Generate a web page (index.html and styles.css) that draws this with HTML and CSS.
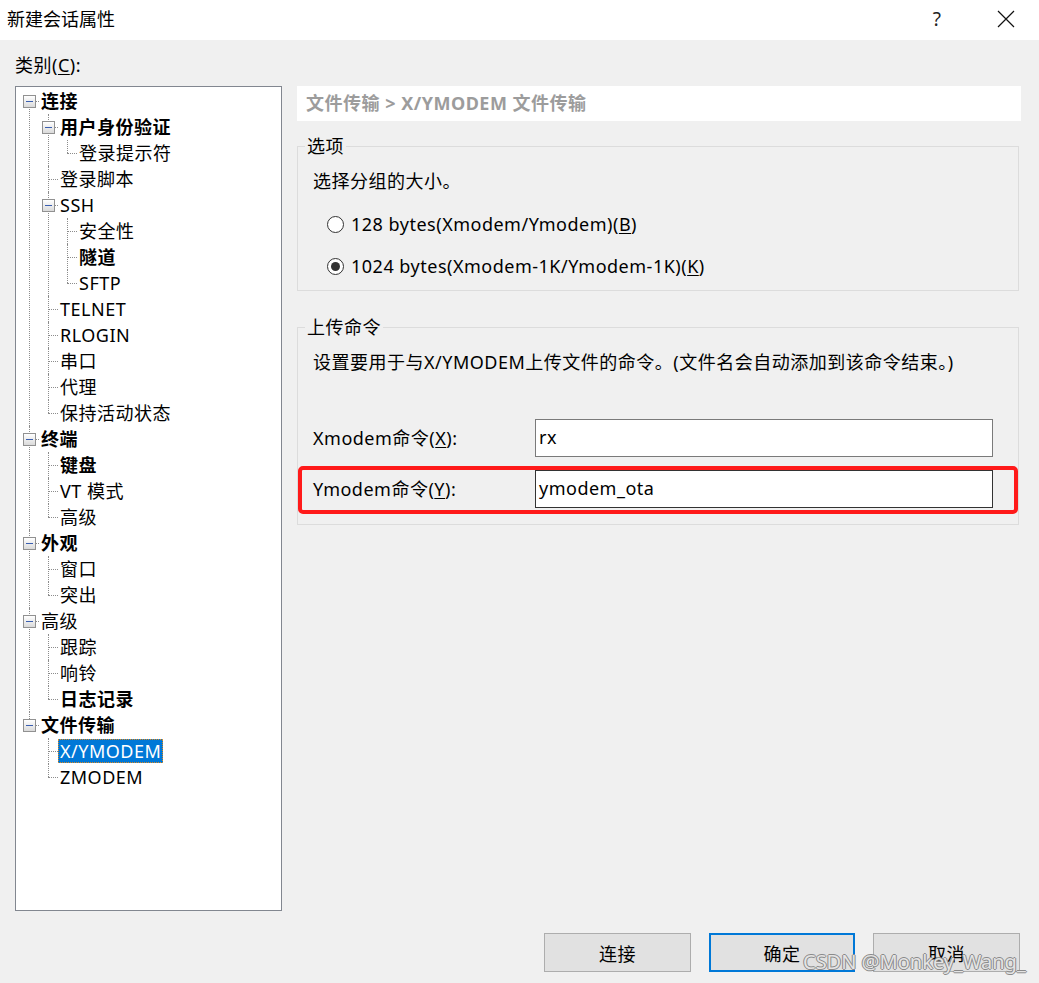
FILE: index.html
```html
<!DOCTYPE html>
<html lang="zh-CN">
<head>
<meta charset="utf-8">
<title>新建会话属性</title>
<link rel="stylesheet" href="styles.css">
</head>
<body>
<div class="window">
  <div class="titlebar">
    <span class="title">新建会话属性</span>
    <span class="help">?</span>
    <span class="close"><svg width="18" height="18" viewBox="0 0 18 18"><path d="M1 1L17 17M17 1L1 17" stroke="#111" stroke-width="1.2" fill="none"/></svg></span>
  </div>
  <div class="content">
    <div class="left">
      <div class="cat-label">类别(<u>C</u>):</div>
      <div class="tree">
        <ul class="l0">
          <li><div class="row"><span class="tg"></span><span class="lb b">连接</span></div>
            <ul class="l1">
              <li><div class="row"><span class="tg"></span><span class="lb b">用户身份验证</span></div>
                <ul class="l2">
                  <li><div class="row"><span class="lb">登录提示符</span></div></li>
                </ul>
              </li>
              <li><div class="row"><span class="lb">登录脚本</span></div></li>
              <li><div class="row"><span class="tg"></span><span class="lb">SSH</span></div>
                <ul class="l2">
                  <li><div class="row"><span class="lb">安全性</span></div></li>
                  <li><div class="row"><span class="lb b">隧道</span></div></li>
                  <li><div class="row"><span class="lb">SFTP</span></div></li>
                </ul>
              </li>
              <li><div class="row"><span class="lb">TELNET</span></div></li>
              <li><div class="row"><span class="lb">RLOGIN</span></div></li>
              <li><div class="row"><span class="lb">串口</span></div></li>
              <li><div class="row"><span class="lb">代理</span></div></li>
              <li><div class="row"><span class="lb">保持活动状态</span></div></li>
            </ul>
          </li>
          <li><div class="row"><span class="tg"></span><span class="lb b">终端</span></div>
            <ul class="l1">
              <li><div class="row"><span class="lb b">键盘</span></div></li>
              <li><div class="row"><span class="lb">VT 模式</span></div></li>
              <li><div class="row"><span class="lb">高级</span></div></li>
            </ul>
          </li>
          <li><div class="row"><span class="tg"></span><span class="lb b">外观</span></div>
            <ul class="l1">
              <li><div class="row"><span class="lb">窗口</span></div></li>
              <li><div class="row"><span class="lb">突出</span></div></li>
            </ul>
          </li>
          <li><div class="row"><span class="tg"></span><span class="lb">高级</span></div>
            <ul class="l1">
              <li><div class="row"><span class="lb">跟踪</span></div></li>
              <li><div class="row"><span class="lb">响铃</span></div></li>
              <li><div class="row"><span class="lb b">日志记录</span></div></li>
            </ul>
          </li>
          <li><div class="row"><span class="tg"></span><span class="lb b">文件传输</span></div>
            <ul class="l1">
              <li><div class="row"><span class="lb sel">X/YMODEM</span></div></li>
              <li><div class="row"><span class="lb">ZMODEM</span></div></li>
            </ul>
          </li>
        </ul>
      </div>
    </div>
    <div class="right">
      <div class="header">文件传输 &gt; X/YMODEM 文件传输</div>
      <fieldset class="group g1">
        <legend>选项</legend>
        <div class="desc">选择分组的大小。</div>
        <div class="radio r1"><span class="circle"></span><span>128 bytes(Xmodem/Ymodem)(<u>B</u>)</span></div>
        <div class="radio r2"><span class="circle on"></span><span>1024 bytes(Xmodem-1K/Ymodem-1K)(<u>K</u>)</span></div>
      </fieldset>
      <fieldset class="group g2">
        <legend>上传命令</legend>
        <div class="desc">设置要用于与X/YMODEM上传文件的命令。(文件名会自动添加到该命令结束。)</div>
        <div class="cmd-row first"><span class="cmd-label">Xmodem命令(<u>X</u>):</span><span class="input">rx</span></div>
        <div class="cmd-row hl"><span class="cmd-label">Ymodem命令(<u>Y</u>):</span><span class="input dark">ymodem_ota</span></div>
      </fieldset>
    </div>
  </div>
  <div class="footer">
    <div class="btn">连接</div>
    <div class="btn default">确定</div>
    <div class="btn">取消</div>
  </div>
  <div class="watermark">CSDN @Monkey_Wang_</div>
</div>
</body>
</html>
```
FILE: styles.css
```css
* { box-sizing: border-box; }
html, body { margin: 0; padding: 0; }
body {
  width: 1039px;
  height: 983px;
  overflow: hidden;
  background: #f0f0f0;
  font-family: "Noto Sans", "Noto Sans CJK SC", sans-serif;
  font-size: 18px;
  letter-spacing: 0.5px;
  color: #000;
}
.window { position: relative; width: 1039px; height: 983px; }
u { text-decoration-thickness: 1px; text-underline-offset: 2px; }

.titlebar {
  height: 40px;
  background: #fff;
  display: flex;
  align-items: center;
  padding-left: 7px;
}
.title { flex: 1; line-height: 24px; margin-top: -2px; letter-spacing: 0; }
.help { width: 20px; text-align: center; margin-right: 50px; font-size: 19px; color: #222; margin-top: -3px; }
.close { width: 18px; height: 18px; margin-right: 24px; display: flex; margin-top: -2px; }

.content { display: flex; padding-left: 15px; gap: 15px; }
.left { width: 267px; }
.cat-label { height: 46px; line-height: 24px; padding-top: 13px; }
.tree {
  height: 825px;
  background: #fff;
  border: 1px solid #828790;
  padding-top: 1px;
}
.tree ul { list-style: none; margin: 0; padding: 0; }
.tree li { position: relative; }
.row { position: relative; height: 26px; display: flex; align-items: center; z-index: 1; }
.l0 > li > .row { padding-left: 25px; }
.l1 > li > .row { padding-left: 44px; }
.l2 > li > .row { padding-left: 63px; }
.l0 { --x: 13px; }
.l1 { --x: 32px; }
.l2 { --x: 51px; }
.tree li::before {
  content: "";
  position: absolute;
  left: var(--x);
  top: 0;
  bottom: 0;
  border-left: 1px dotted #8c8c8c;
}
.l0 > li:first-child::before { top: 13px; }
.tree li:last-child::before { bottom: auto; height: 13px; }
.l0 > li:first-child:last-child::before { display: none; }
.tree li::after {
  content: "";
  position: absolute;
  left: var(--x);
  top: 13px;
  width: 10px;
  border-top: 1px dotted #8c8c8c;
}
.tg {
  position: absolute;
  left: calc(var(--x) - 6px);
  top: 7px;
  width: 13px;
  height: 13px;
  border: 1px solid #919191;
  background: linear-gradient(#ffffff, #dadada);
  z-index: 2;
}
.tg::after {
  content: "";
  position: absolute;
  left: 2px;
  right: 2px;
  top: 5px;
  height: 1px;
  background: #3b5fb0;
}
.lb {
  line-height: 22px;
  padding: 0 1px;
  margin-left: -2px;
  border: 1px solid transparent;
  white-space: nowrap;
}
.lb.b { font-weight: bold; }
.lb.sel {
  background: #0078d7;
  color: #fff;
  border: 1px dotted #e08a20;
}

.right { width: 724px; padding-top: 46px; }
.header {
  height: 35px;
  background: #fff;
  color: #9c9c9c;
  font-weight: bold;
  line-height: 35px;
  padding-left: 9px;
}
.group {
  margin: 0;
  border: 1px solid #dcdcdc;
  padding: 0 0 0 15px;
  width: 722px;
  min-width: 0;
}
.group legend {
  padding: 0 2px;
  margin-left: -8px;
  line-height: 20px;
}
.g1 { margin-top: 15px; padding-bottom: 12px; }
.g2 { margin-top: 26px; padding-bottom: 10px; padding-left: 0; }
.desc { line-height: 24px; margin-top: 13px; }
.g2 .desc { padding-left: 15px; }
.g2 legend { margin-left: 7px; }
.radio { display: flex; align-items: center; height: 24px; padding-left: 14px; gap: 7px; }
.r1 { margin-top: 19px; }
.r2 { margin-top: 18px; }
.circle {
  width: 17px;
  height: 17px;
  border: 1px solid #333;
  border-radius: 50%;
  background: #fff;
  display: flex;
  align-items: center;
  justify-content: center;
}
.circle.on::after {
  content: "";
  width: 9px;
  height: 9px;
  border-radius: 50%;
  background: #333;
}

.cmd-row {
  display: flex;
  align-items: flex-start;
  height: 48px;
  border: 4px solid transparent;
  border-radius: 5px;
  padding-left: 11px;
}
.cmd-row.first { margin-top: 41px; }
.cmd-row.hl { margin-top: 3px; border-color: #ff1a1a; }
.cmd-label { width: 222px; line-height: 38px; }
.input {
  width: 458px;
  height: 38px;
  border: 1px solid #7a7a7a;
  background: #fff;
  line-height: 34px;
  padding-left: 3px;
}
.input.dark { border-color: #333; }

.footer {
  display: flex;
  justify-content: flex-end;
  gap: 18px;
  padding-top: 22px;
  padding-right: 19px;
}
.btn {
  width: 147px;
  height: 39px;
  background: #e1e1e1;
  border: 1px solid #adadad;
  display: flex;
  align-items: center;
  justify-content: center;
}
.btn.default { border: 2px solid #0078d7; width: 146px; }

.watermark {
  position: absolute;
  left: 803px;
  top: 948px;
  font-size: 20px;
  letter-spacing: 0;
  line-height: 28px;
  color: rgba(245, 245, 245, 0.85);
  text-shadow: -1px 0 #8a8a8a, 1px 0 #8a8a8a, 0 -1px #8a8a8a, 0 1px #8a8a8a;
  white-space: nowrap;
}
```
